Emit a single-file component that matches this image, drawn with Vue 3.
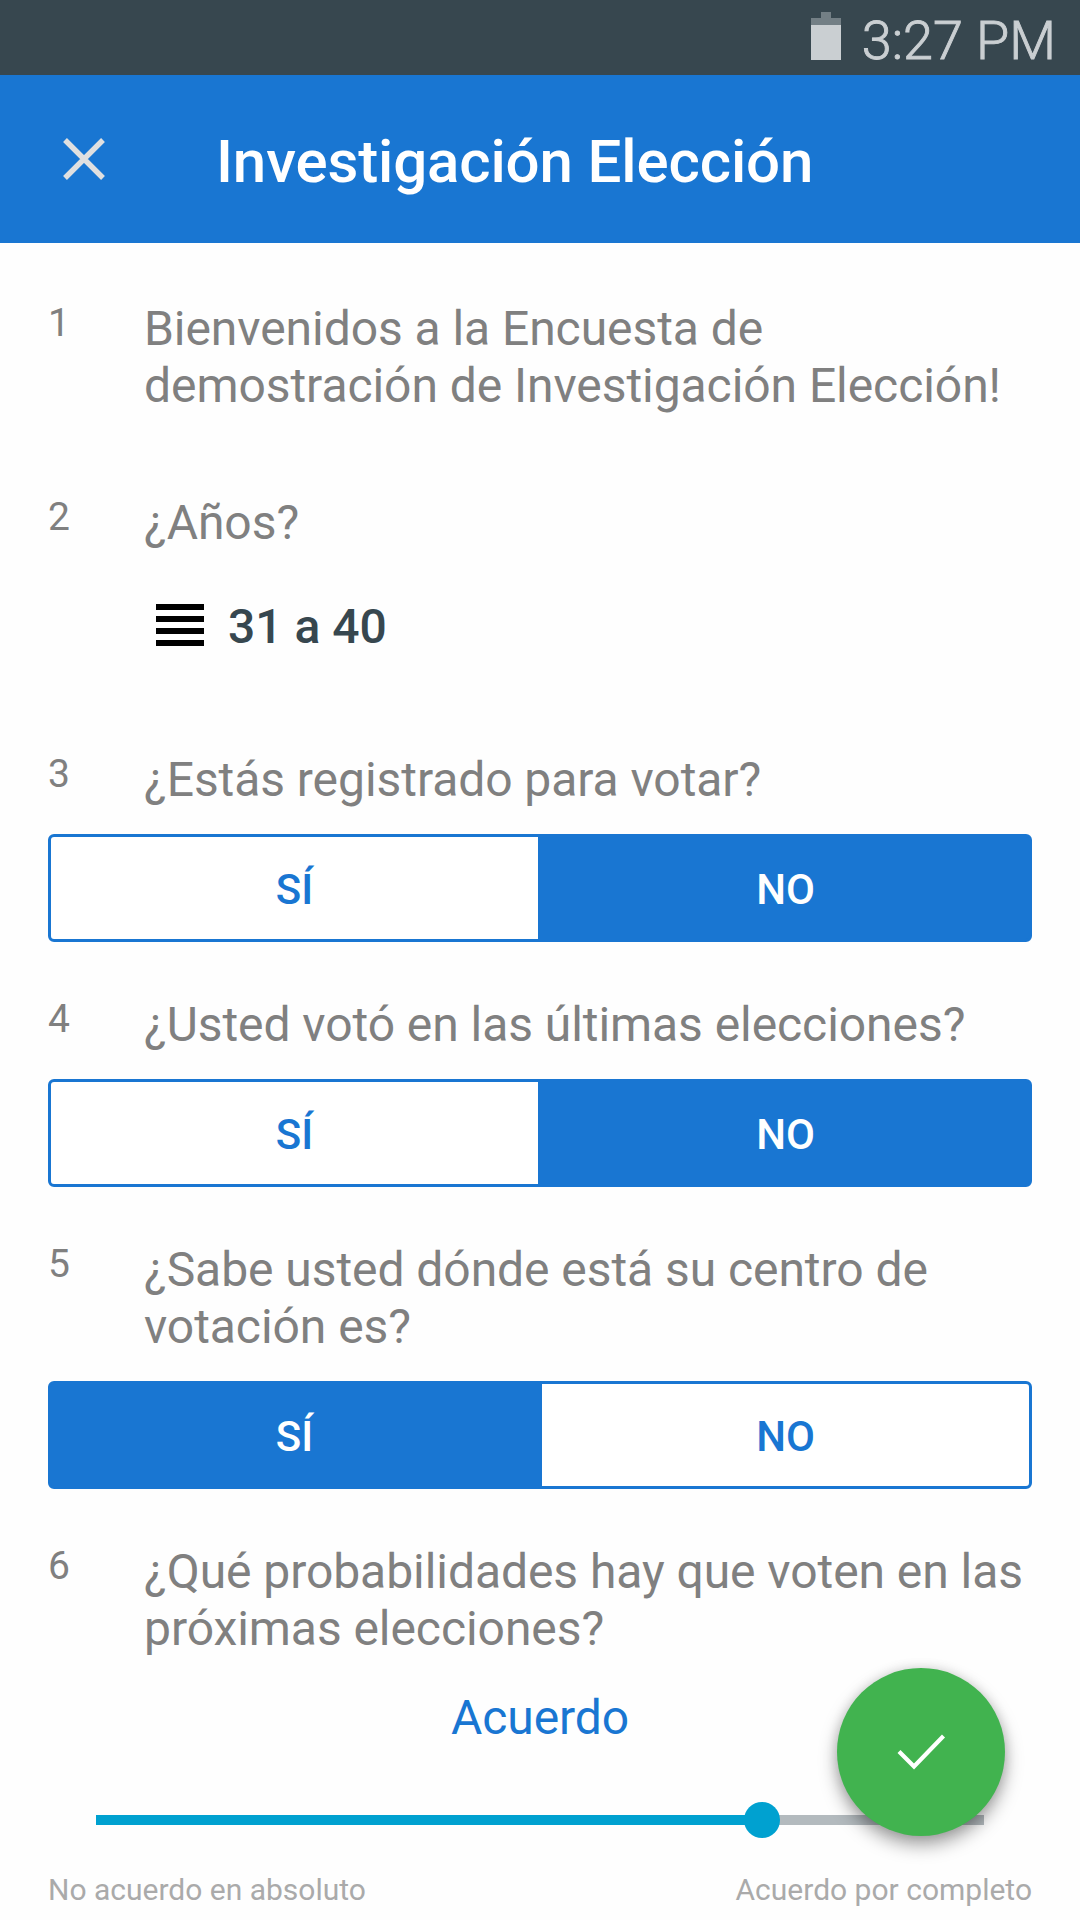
<script setup>
import { ref } from "vue";

const questions = ref([
  { type: "info", text: "Bienvenidos a la Encuesta de demostración de Investigación Elección!" },
  { type: "list", text: "¿Años?", answer: "31 a 40" },
  { type: "yesno", text: "¿Estás registrado para votar?", answer: "NO" },
  { type: "yesno", text: "¿Usted votó en las últimas elecciones?", answer: "NO" },
  { type: "yesno", text: "¿Sabe usted dónde está su centro de votación es?", answer: "SÍ" },
  {
    type: "scale",
    text: "¿Qué probabilidades hay que voten en las próximas elecciones?",
    answer: "Acuerdo",
    value: 75,
    min: "No acuerdo en absoluto",
    max: "Acuerdo por completo",
  },
]);

const options = ["SÍ", "NO"];
</script>

<template>
  <div class="screen">
    <div class="status-bar">
      <svg class="battery" width="30" height="48" viewBox="0 0 30 48">
        <path d="M10 0h10v6h10v7H0V6h10z" fill="#737f85" />
        <path d="M0 13h30v35H0z" fill="#cacfd2" />
      </svg>
      <span class="clock">3:27 PM</span>
    </div>

    <header class="app-bar">
      <svg class="close" width="42" height="42" viewBox="0 0 42 42">
        <path d="M2 2l38 38M40 2L2 40" stroke="#e0e0e0" stroke-width="5.4" />
      </svg>
      <h1>Investigación Elección</h1>
    </header>

    <main class="survey">
      <section v-for="(q, index) in questions" :key="index" class="question" :class="q.type">
        <div class="heading">
          <span class="number">{{ index + 1 }}</span>
          <p class="text">{{ q.text }}</p>
        </div>

        <div v-if="q.type === 'list'" class="choice">
          <svg width="48" height="42" viewBox="0 0 48 42">
            <path d="M0 0h48v6H0zM0 12h48v6H0zM0 24h48v6H0zM0 36h48v6H0z" />
          </svg>
          <span>{{ q.answer }}</span>
        </div>

        <div v-if="q.type === 'yesno'" class="toggle">
          <button
            v-for="option in options"
            :key="option"
            :class="{ selected: q.answer === option }"
            @click="q.answer = option"
          >
            {{ option }}
          </button>
        </div>

        <div v-if="q.type === 'scale'">
          <p class="scale-value">{{ q.answer }}</p>
          <div class="track">
            <div class="fill" :style="{ width: q.value + '%' }"></div>
            <div class="thumb"></div>
          </div>
          <div class="scale-labels">
            <span>{{ q.min }}</span>
            <span>{{ q.max }}</span>
          </div>
        </div>
      </section>
    </main>

    <button class="fab">
      <svg width="56" height="42" viewBox="0 0 56 42">
        <path d="M6 20.5l15 15L50.5 5" fill="none" stroke="#fff" stroke-width="4.2" />
      </svg>
    </button>
  </div>
</template>

<style>
body {
  margin: 0;
  background: #fefefe;
}
</style>

<style scoped>
.screen {
  position: relative;
  width: 1080px;
  height: 1920px;
  overflow: hidden;
  background: #fefefe;
  font-family: Roboto, "Noto Sans", sans-serif;
}

.status-bar {
  display: flex;
  justify-content: flex-end;
  box-sizing: border-box;
  height: 75px;
  padding-right: 24px;
  background: #37474f;
}

.battery {
  margin-top: 12px;
  margin-right: 21px;
}

.clock {
  padding-top: 9px;
  font-size: 54px;
  font-weight: 300;
  line-height: 63px;
  color: #cacfd2;
  -webkit-text-stroke: 0.9px #cacfd2;
}

.app-bar {
  display: flex;
  align-items: center;
  height: 168px;
  background: #1976d2;
}

.close {
  margin-left: 63px;
}

h1 {
  margin: 6px 0 0 111px;
  font-size: 60px;
  font-weight: 500;
  line-height: 70px;
  letter-spacing: -0.13px;
  color: #fff;
}

.survey {
  padding: 57px 48px 0;
}

p {
  margin: 0;
}

.question {
  margin-bottom: 54px;
}

.question.info {
  margin-bottom: 80px;
}

.question.list {
  margin-bottom: 96px;
}

.heading {
  display: flex;
  color: #808080;
}

.number {
  width: 96px;
  flex: none;
  font-size: 39px;
  line-height: 47px;
}

.text {
  flex: 1;
  font-size: 48px;
  line-height: 57px;
  letter-spacing: -0.06px;
}

.choice {
  display: flex;
  align-items: center;
  gap: 24px;
  margin: 47px 0 0 108px;
  font-size: 48px;
  font-weight: 500;
  line-height: 57px;
  color: #37474f;
}

.choice svg {
  margin-bottom: 3px;
}

.toggle {
  display: flex;
  margin-top: 26px;
}

.toggle button {
  width: 493px;
  height: 108px;
  padding: 3px 0 0;
  border: 3px solid #1976d2;
  border-radius: 6px 0 0 6px;
  background: #fff;
  font-family: inherit;
  font-size: 42px;
  font-weight: 500;
  color: #1976d2;
}

.toggle button:last-child {
  margin-left: -2px;
  border-radius: 0 6px 6px 0;
}

.toggle button.selected {
  z-index: 1;
  background: #1976d2;
  color: #fff;
}

.scale-value {
  margin-top: 32px;
  font-size: 48px;
  line-height: 57px;
  letter-spacing: -0.1px;
  text-align: center;
  color: #1976d2;
}

.track {
  display: flex;
  align-items: center;
  height: 10px;
  margin: 69px 48px 0;
  background: #b3babe;
}

.fill {
  height: 10px;
  background: #00a1d0;
}

.thumb {
  flex: none;
  width: 36px;
  height: 36px;
  margin-left: -18px;
  border-radius: 50%;
  background: #00a1d0;
}

.scale-labels {
  display: flex;
  justify-content: space-between;
  margin-top: 47px;
  font-size: 30px;
  line-height: 35px;
  color: #aaa;
}

.fab {
  position: absolute;
  right: 75px;
  bottom: 84px;
  display: flex;
  align-items: center;
  justify-content: center;
  width: 168px;
  height: 168px;
  padding: 0;
  border: none;
  border-radius: 50%;
  background: #41b34f;
  box-shadow: 0 9px 18px rgba(0, 0, 0, 0.36), 0 0 12px rgba(0, 0, 0, 0.12);
}
</style>
